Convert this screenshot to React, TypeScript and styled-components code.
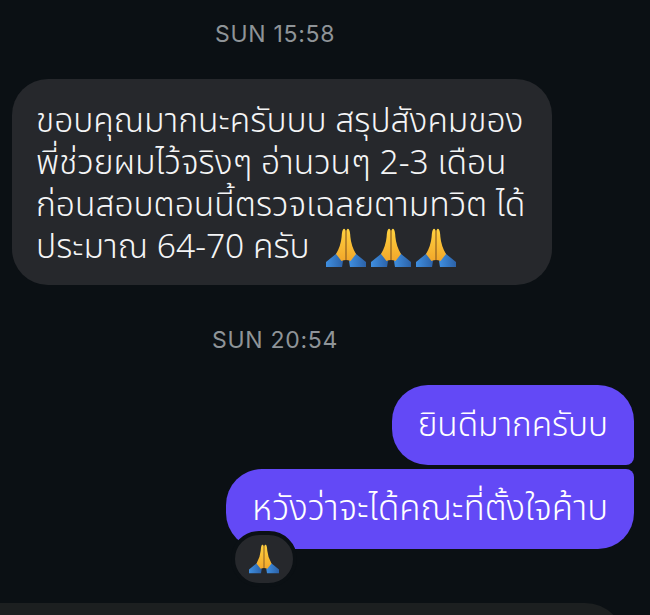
import styled, { createGlobalStyle } from "styled-components";

const GlobalStyle = createGlobalStyle`
  html, body {
    margin: 0;
    padding: 0;
    background: #0b1014;
  }
`;

const Screen = styled.div`
  width: 650px;
  height: 615px;
  overflow: hidden;
  display: flex;
  flex-direction: column;
  background: #0b1014;
  font-family: "Noto Sans", "Noto Sans Thai", Inter, sans-serif;
`;

const TimeLabel = styled.div<{ $top: number; $bottom: number }>`
  flex: none;
  width: 550px;
  margin: ${(p) => p.$top}px 0 ${(p) => p.$bottom}px;
  text-align: center;
  font-family: Inter, "Liberation Sans", sans-serif;
  font-size: 23px;
  line-height: 28px;
  letter-spacing: 0.7px;
  color: #8f9498;
`;

const Incoming = styled.div`
  flex: none;
  margin-left: 12px;
  width: 540px;
  height: 206px;
  box-sizing: border-box;
  padding: 19px 0 0 24px;
  border-radius: 36px;
  background: #26282c;
  color: #f4f5f6;
  font-size: 33.6px;
  font-weight: 300;
  line-height: 42px;
  white-space: nowrap;
`;

const HandsRow = styled.span`
  display: inline-flex;
  gap: 5px;
  margin-left: 16px;
  vertical-align: -9px;
`;

const OutgoingGroup = styled.div`
  flex: none;
  display: flex;
  flex-direction: column;
  align-items: flex-end;
  gap: 4px;
  padding-right: 16px;
`;

const Outgoing = styled.div<{ $first?: boolean }>`
  position: relative;
  height: 80px;
  box-sizing: border-box;
  padding: 0 26px;
  display: flex;
  align-items: center;
  background: #6349f6;
  color: #fff;
  font-size: ${(p) => (p.$first ? "33.4px" : "34.8px")};
  font-weight: 300;
  white-space: nowrap;
  border-radius: ${(p) => (p.$first ? "36px 36px 8px 36px" : "36px 8px 36px 36px")};
`;

const Reaction = styled.div`
  position: absolute;
  left: 5px;
  top: 62px;
  width: 66px;
  height: 56px;
  box-sizing: border-box;
  display: flex;
  align-items: center;
  justify-content: center;
  border: 4px solid #0b1014;
  border-radius: 28px;
  background: #26282c;
`;

const Composer = styled.div`
  flex: none;
  margin-top: 54px;
  width: 625px;
  height: 40px;
  border-radius: 0 40px 0 0;
  background: #1c1f20;
`;

function PrayingHands({ size, id }: { size: number; id: string }) {
  return (
    <svg width={size} height={size * 0.98} viewBox="0 0 40 39">
      <defs>
        <linearGradient id={`${id}-skin`} x1="0" y1="0" x2="0" y2="1">
          <stop offset="0" stopColor="#ffd23f" />
          <stop offset="1" stopColor="#f2a72a" />
        </linearGradient>
        <linearGradient id={`${id}-sleeve`} x1="0" y1="0" x2="1" y2="0">
          <stop offset="0" stopColor="#3f8fe0" />
          <stop offset="1" stopColor="#2c62a8" />
        </linearGradient>
      </defs>
      <path d="M0 39 L0 34 L11 25 L17 33 L16 39 Z" fill={`url(#${id}-sleeve)`} />
      <path d="M40 39 L40 34 L29 25 L23 33 L24 39 Z" fill={`url(#${id}-sleeve)`} />
      <path d="M19.6 32 L19.6 3 Q19 0 17.4 1 Q16 2 15.6 9 Q14.8 18 10 26 L15.5 33 Q18 32 19.6 32 Z" fill={`url(#${id}-skin)`} />
      <path d="M20.4 32 L20.4 3 Q21 0 22.6 1 Q24 2 24.4 9 Q25.2 18 30 26 L24.5 33 Q22 32 20.4 32 Z" fill={`url(#${id}-skin)`} />
      <path d="M20 2 L20 32" stroke="#d98a1e" strokeWidth="0.8" />
    </svg>
  );
}

export default function App() {
  return (
    <>
      <GlobalStyle />
      <Screen>
        <TimeLabel $top={20} $bottom={31}>SUN 15:58</TimeLabel>
        <Incoming>
          ขอบคุณมากนะครับบบ สรุปสังคมของ
          <br />
          พี่ช่วยผมไว้จริงๆ อ่านวนๆ 2-3 เดือน
          <br />
          ก่อนสอบตอนนี้ตรวจเฉลยตามทวิต ได้
          <br />
          ประมาณ 64-70 ครับ
          <HandsRow>
            <PrayingHands size={40} id="a" />
            <PrayingHands size={40} id="b" />
            <PrayingHands size={40} id="c" />
          </HandsRow>
        </Incoming>
        <TimeLabel $top={41} $bottom={31}>SUN 20:54</TimeLabel>
        <OutgoingGroup>
          <Outgoing $first>ยินดีมากครับบ</Outgoing>
          <Outgoing>
            หวังว่าจะได้คณะที่ตั้งใจค้าบ
            <Reaction>
              <PrayingHands size={30} id="d" />
            </Reaction>
          </Outgoing>
        </OutgoingGroup>
        <Composer />
      </Screen>
    </>
  );
}
